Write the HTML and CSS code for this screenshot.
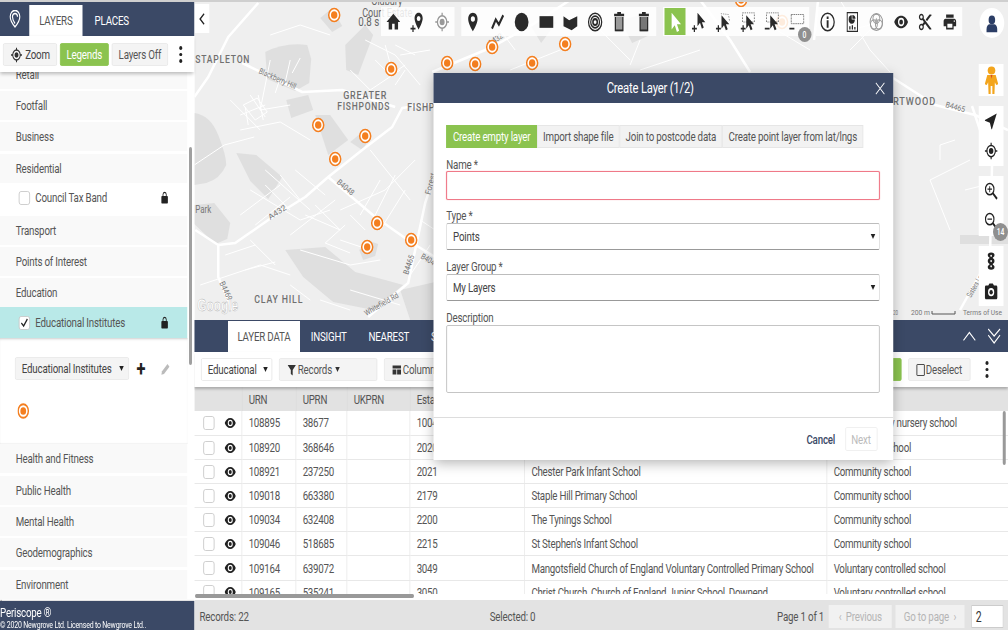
FILE: index.html
```html
<!DOCTYPE html>
<html lang="en">
<head>
<meta charset="utf-8">
<title>Periscope</title>
<link rel="stylesheet" href="styles.css">
</head>
<body>
<svg class="sprite" xmlns="http://www.w3.org/2000/svg">
  <symbol id="i-home" viewBox="0 0 24 24"><path d="M10 21v-7h4v7h5.500v-9H23L12 2 1 12h3.500v9z"/></symbol>
  <symbol id="i-pin" viewBox="0 0 24 24"><path fill-rule="evenodd" d="M12 1C7.600 1 4.500 4.400 4.500 8.600 4.500 14 12 23 12 23s7.500-9 7.500-14.400C19.500 4.400 16.400 1 12 1zm0 4.200a3.300 3.300 0 1 1 0 6.600 3.300 3.300 0 0 1 0-6.600z"/></symbol>
  <symbol id="i-pinplus" viewBox="0 0 24 24"><path fill-rule="evenodd" d="M14 1c-4 0-6.500 3-6.500 6.800C7.500 12.500 14 21 14 21s6.500-8.500 6.500-13.200C20.500 4 18 1 14 1zm0 3.800a3 3 0 1 1 0 6 3 3 0 0 1 0-6z"/><path d="M4 16h2v3h3v2H6v3H4v-3H1v-2h3z"/></symbol>
  <symbol id="i-target" viewBox="0 0 24 24"><circle cx="12" cy="12" r="7.500" fill="none" stroke="currentColor" stroke-width="2"/><circle cx="12" cy="12" r="4"/><path d="M11 1h2v4h-2zM11 19h2v4h-2zM1 11h4v2H1zM19 11h4v2h-4z"/></symbol>
  <symbol id="i-line" viewBox="0 0 24 24"><path d="M3 20l6-11 5 6 7-11" fill="none" stroke="currentColor" stroke-width="3.200"/></symbol>
  <symbol id="i-circle" viewBox="0 0 24 24"><circle cx="12" cy="12" r="11"/></symbol>
  <symbol id="i-rect" viewBox="0 0 24 24"><rect x="1" y="5" width="22" height="14"/></symbol>
  <symbol id="i-poly" viewBox="0 0 24 24"><path d="M1 5l9 5 13-5v12l-9 5-13-5z"/></symbol>
  <symbol id="i-rings" viewBox="0 0 24 24"><g fill="none" stroke="currentColor"><circle cx="12" cy="12" r="10.500" stroke-width="2"/><circle cx="12" cy="12" r="7" stroke-width="2"/><circle cx="12" cy="12" r="3.500" stroke-width="2.500"/></g></symbol>
  <symbol id="i-trash" viewBox="0 0 24 24"><path fill="#999" d="M6 6h12v17H6z"/><path d="M9 0h6v2h5v3H4V2h5zM5 6h2v15h10V6h2v17H5z"/></symbol>
  <symbol id="i-trash2" viewBox="0 0 24 24"><path fill="#777" d="M6 6h12v17H6z"/><path d="M9 0h6v2h5v3H4V2h5zM5 6h2v15h10V6h2v17H5z"/></symbol>
  <symbol id="i-cursor" viewBox="0 0 24 24"><path d="M6 1v20l5-5 3.500 8 3.500-1.500-3.500-7.800H21z"/></symbol>
  <symbol id="i-curplus" viewBox="0 0 24 24"><path d="M9 1v16l4-4 3 7 3-1.300-3-6.500h5.500z"/><path d="M3 16h2v3h3v2H5v3H3v-3H0v-2h3z"/></symbol>
  <symbol id="i-curpoly" viewBox="0 0 24 24"><path d="M8 2l12 1 2 8" fill="none" stroke="#777" stroke-dasharray="2 1.500"/><path d="M9 4v16l4-4 3 6 3-1.300-3-6h5.500z"/><path d="M3 16h2v3h3v2H5v3H3v-3H0v-2h3z"/></symbol>
  <symbol id="i-boxplus" viewBox="0 0 24 24"><rect x="3" y="1" width="19" height="11" fill="none" stroke="#555" stroke-dasharray="2 1.500"/><path d="M9 4v16l4-4 3 6 3-1.300-3-6h5.500z"/><path d="M3 16h2v3h3v2H5v3H3v-3H0v-2h3z"/></symbol>
  <symbol id="i-boxminus" viewBox="0 0 24 24"><rect x="3" y="1" width="19" height="11" fill="none" stroke="#555" stroke-dasharray="2 1.500"/><path d="M9 4v16l4-4 3 6 3-1.300-3-6h5.500z"/><path d="M0 19h8v2H0z"/></symbol>
  <symbol id="i-rectminus" viewBox="0 0 24 24"><rect x="3" y="3" width="20" height="11" fill="none" stroke="#555" stroke-dasharray="2.500 1"/><path d="M0 19h8v2H0z"/></symbol>
  <symbol id="i-info" viewBox="0 0 24 24"><circle cx="12" cy="12" r="10.500" fill="none" stroke="currentColor" stroke-width="2"/><path d="M10.500 5.500h3v3h-3zM10.500 10h3v9h-3z"/></symbol>
  <symbol id="i-doc" viewBox="0 0 24 24"><path fill-rule="evenodd" d="M3 0h18v24H3zm1.500 1.500v21h15v-21z"/><path d="M11 4a5 5 0 1 0 5 5h-5z"/><path d="M12 3.500a5 5 0 0 1 5 4.500h-5zM7 21v-4h2v4zM11 21v-5h2v5zM15 21v-3h2v3z"/></symbol>
  <symbol id="i-lock" viewBox="0 0 24 24"><g fill="none" stroke="#999" stroke-width="1.500"><circle cx="12" cy="12" r="10"/><circle cx="12" cy="8" r="5.500"/><circle cx="8" cy="15" r="5.500"/><circle cx="16" cy="15" r="5.500"/></g><path fill="#aaa" d="M12 7l4 6H8z"/></symbol>
  <symbol id="i-eye" viewBox="0 0 24 24"><path fill-rule="evenodd" d="M12 4.500C7 4.500 2.700 7.600 1 12c1.700 4.400 6 7.500 11 7.500s9.300-3.100 11-7.500c-1.700-4.400-6-7.500-11-7.500zM12 17a5 5 0 1 1 0-10 5 5 0 0 1 0 10zm0-8a3 3 0 1 0 0 6 3 3 0 0 0 0-6z"/></symbol>
  <symbol id="i-cut" viewBox="0 0 24 24"><path fill-rule="evenodd" d="M9.640 7.640c.23-.5.360-1.050.360-1.640 0-2.210-1.790-4-4-4S2 3.790 2 6s1.790 4 4 4c.59 0 1.140-.13 1.640-.36L10 12l-2.360 2.360C7.140 14.130 6.590 14 6 14c-2.210 0-4 1.790-4 4s1.790 4 4 4 4-1.790 4-4c0-.59-.13-1.140-.36-1.640L12 14l7 7h3v-1L9.640 7.640zM6 8c-1.100 0-2-.89-2-2s.9-2 2-2 2 .89 2 2-.9 2-2 2zm0 12c-1.100 0-2-.89-2-2s.9-2 2-2 2 .89 2 2-.9 2-2 2z"/><path d="M19 3l-6 6 2 2 7-7V3z"/></symbol>
  <symbol id="i-print" viewBox="0 0 24 24"><path fill-rule="evenodd" d="M19 8H5c-1.660 0-3 1.340-3 3v6h4v4h12v-4h4v-6c0-1.660-1.340-3-3-3zm-3 11H8v-5h8v5zm3-7c-.55 0-1-.45-1-1s.45-1 1-1 1 .45 1 1-.45 1-1 1z"/><path d="M18 3H6v4h12z"/></symbol>
  <symbol id="i-user" viewBox="0 0 24 24"><circle cx="12" cy="7.500" r="5.500"/><path d="M3 23v-4c0-4 3-6 5-6h8c2 0 5 2 5 6v4z"/></symbol>
  <symbol id="i-nav" viewBox="0 0 24 24"><path d="M22 2L1 10.500v1l8.800 2.700L12.500 23h1z"/></symbol>
  <symbol id="i-zoomin" viewBox="0 0 24 24"><circle cx="9.500" cy="9.500" r="7.500" fill="none" stroke="currentColor" stroke-width="2"/><path d="M15 15l7.500 7.500" stroke="currentColor" stroke-width="3"/><path d="M8.700 5.500h1.600v3.200h3.200v1.600h-3.200v3.200H8.700v-3.200H5.500V8.700h3.200z"/></symbol>
  <symbol id="i-zoomout" viewBox="0 0 24 24"><circle cx="9.500" cy="9.500" r="7.500" fill="none" stroke="currentColor" stroke-width="2"/><path d="M15 15l7.500 7.500" stroke="currentColor" stroke-width="3"/><path d="M5.500 8.700h8v1.600h-8z"/></symbol>
  <symbol id="i-traffic" viewBox="0 0 24 24"><ellipse cx="12" cy="4" rx="6" ry="3.500"/><ellipse cx="12" cy="12" rx="6" ry="4"/><ellipse cx="12" cy="20" rx="6" ry="3.500"/><rect x="9" y="2" width="6" height="20"/><g fill="#fff"><circle cx="12" cy="5" r="1.500"/><circle cx="12" cy="12" r="1.500"/><circle cx="12" cy="19" r="1.500"/></g></symbol>
  <symbol id="i-camera" viewBox="0 0 24 24"><path fill-rule="evenodd" d="M21 4.500h-4L15 2H9L7 4.500H3c-1.100 0-2 .9-2 2V21c0 1.100.9 2 2 2h18c1.100 0 2-.9 2-2V6.500c0-1.100-.9-2-2-2zM12 19a5.500 5.500 0 1 1 0-11 5.500 5.500 0 0 1 0 11z"/><circle cx="12" cy="13.500" r="3"/></symbol>
  <symbol id="i-peg" viewBox="0 0 16 32" preserveAspectRatio="none"><circle cx="8" cy="5" r="4.500" fill="#f3a51d"/><path fill="#f3a51d" d="M3 10h10l3 10-2.500 1-1.500-3-.5 13H9v-9H7v9H4.500L4 18l-1.500 3L0 20z"/><path fill="#d9472b" d="M7 10h2l-1 4z"/></symbol>
  <symbol id="i-logo" viewBox="0 0 24 24"><g fill="none" stroke="currentColor" stroke-width="2"><path d="M12 22.500S3.500 15 3.500 9a8.500 8.500 0 0 1 17 0c0 6-8.500 13.500-8.500 13.500z"/><path d="M12 18s-4.500-5-4.500-9a4.500 4.500 0 0 1 9 0"/></g></symbol>
  <symbol id="i-padlock" viewBox="0 0 24 24"><path fill-rule="evenodd" d="M18 9h-1V6.500a5 5 0 0 0-10 0V9H6c-1.100 0-2 .9-2 2v10c0 1.100.9 2 2 2h12c1.100 0 2-.9 2-2V11c0-1.100-.9-2-2-2zM9 6.500a3 3 0 0 1 6 0V9H9z"/></symbol>
  <symbol id="i-funnel" viewBox="0 0 24 24"><path d="M1 2h22l-8.500 10v11l-5-3v-8z"/></symbol>
  <symbol id="i-cols" viewBox="0 0 24 24"><path d="M0 3h24v6H0zM0 11h11v10H0zM13 11h11v10H13z"/></symbol>
  <symbol id="i-pencil" viewBox="0 0 24 24"><path d="M2 22l1.500-6L16 3.500l4.500 4.500L8 20.500z"/></symbol>
  <symbol id="i-marker" viewBox="0 0 20 20"><circle cx="10" cy="10" r="8.500" fill="#fff" stroke="#f47f20" stroke-width="2.400"/><circle cx="10" cy="10" r="4.800" fill="#f47f20"/></symbol>
</svg>

<div class="app">
  <aside class="sidebar">
    <div class="side-head">
      <div class="logo"><svg class="ico-logo"><use href="#i-logo"/></svg></div>
      <div class="side-tab active">LAYERS</div>
      <div class="side-tab">PLACES</div>
    </div>
    <div class="side-actions">
      <button class="btn btn-zoom"><svg class="ico-sm"><use href="#i-target"/></svg>Zoom</button>
      <button class="btn btn-green btn-legends">Legends</button>
      <button class="btn btn-off">Layers Off</button>
      <div class="kebab"><i></i><i></i><i></i></div>
    </div>
    <div class="side-body">
      <div class="list">
        <div class="group first">Retail</div>
        <div class="group">Footfall</div>
        <div class="group">Business</div>
        <div class="group">Residential</div>
        <div class="layer"><span class="check"></span><span class="layer-name">Council Tax Band</span><svg class="ico-lock"><use href="#i-padlock"/></svg></div>
        <div class="group">Transport</div>
        <div class="group">Points of Interest</div>
        <div class="group">Education</div>
        <div class="layer selected"><span class="check checked">
          <svg viewBox="0 0 12 12"><path d="M2 6l3 3 5-7" fill="none" stroke="#222" stroke-width="1.600"/></svg></span><span class="layer-name">Educational Institutes</span><svg class="ico-lock"><use href="#i-padlock"/></svg></div>
        <div class="legend">
          <div class="legend-row">
            <div class="fake-select legend-select"><span>Educational Institutes</span><i class="caret"></i></div>
            <span class="legend-plus">+</span>
            <svg class="ico-pencil"><use href="#i-pencil"/></svg>
          </div>
          <svg class="legend-marker"><use href="#i-marker"/></svg>
        </div>
        <div class="group">Health and Fitness</div>
        <div class="group">Public Health</div>
        <div class="group">Mental Health</div>
        <div class="group">Geodemographics</div>
        <div class="group">Environment</div>
      </div>
      <div class="track"><div class="thumb"></div></div>
    </div>
    <div class="side-foot">
      <div class="brand">Periscope ®</div>
      <div class="copy">© 2020 Newgrove Ltd. Licensed to Newgrove Ltd..</div>
    </div>
  </aside>

  <main class="main">
    <section class="map">
      <svg class="map-art" viewBox="194 2 814 318" preserveAspectRatio="none">
        <defs><g id="mk"><ellipse rx="5.500" ry="6.500" fill="#fff" stroke="#f47f20" stroke-width="1.500"/><ellipse rx="3.200" ry="3.800" fill="#f47f20"/></g></defs>
        <rect x="194" y="0" width="814" height="320" fill="#efefef"/>
        <g fill="#dfdfdf">
          <path d="M194 113q16 2 24 22t8 30q-6 14-20 18l-12 2z"/>
          <path d="M265 52q20-10 42-7l4 14-2 24-14 8-28-12z"/>
          <path d="M286 100l22-5 5 15-22 8z"/>
          <path d="M315 115l15 0 18 25-20 15z"/>
          <path d="M236 153l20 2 26 22-14 22-18-18z"/>
          <path d="M194 205l20-2 16 20-3 16-12 5-21-20z"/>
          <path d="M285 250l40-3 30 25 30 8 18 5-30 25-40-8-30-25z"/>
          <path d="M350 142l12-10 8 6-8 12z"/>
          <path d="M359 250l10-9 9 3-3 12-12 4z"/>
          <path d="M320 18l12-10 10 18-10 6z"/>
          <path d="M345 45l20-20 8 10-15 40-12-5z"/>
          <path d="M400 290l35-8v38h-25z"/>
          <path d="M530 25l20-10 6 8-15 20z"/>
          <path d="M620 20l20-5 10 20-18 8z"/>
          <path d="M960 235h48v9h-48z"/>
        </g>
        <g fill="none" stroke="#fff" stroke-width="2.500" stroke-linejoin="round">
          <path d="M195 230l23 15 17-2 33-23 37-23 23-20 34-27 30-23 10-19 33-5"/>
          <path d="M328 177l47 40 37 26 23 14"/>
          <path d="M435 173l-10 30-10 47-7 33-40 34"/>
          <path d="M218 245v32l14 33"/>
          <path d="M258 3l-30 34-20 40-14 20"/>
          <path d="M242 63l60 29 40-2 53 17"/>
          <path d="M432 72l58-24 40-22 40-26"/>
          <path d="M893 78l42 27 40 10 33 15"/>
          <path d="M972 106l20 60-2 90-30 54"/>
          <path d="M818 0l-4 40"/>
          <path d="M700 0l30 40 20 32"/>
        </g>
        <g fill="none" stroke="#fff" stroke-width="1">
          <path d="M240 130l40-8 30 18M194 165l30-20 30-8M250 190l50 30 30-10M265 170l45 40M290 235l45-35M300 250l50 15 30-5M340 210l45-20 30-30M370 150l40 50M350 70l20 20 30-20M365 40l30 15 25 30M400 55l30-5M270 60l-10 50 30-5M230 100l30 30M330 35l-30-10-30 10M200 285l60-20 30 10M350 290l50 15M560 50l-50 20M600 30l30 30M700 50l-60 20M760 20l50 30M840 0l30 50 20 22M950 230l-20-50 40-20M955 140l-15 5v15M965 190l20-5"/>
          <path d="M243 105l12 15 12-8-10-14zM250 95l15 22M240 115l25-10M248 125l-3-18M258 95l5 25M375 60l15 15 15-10M385 45l8 30M395 45l20 10M405 70l-10 15M265 185l25 25M280 175l20 25M295 170l30 25M240 215l40-30M255 225l35-28M305 215l35 15M315 205l25 25M345 225l-20 18 25 10M340 240l30 10M350 215l15 15M380 180l-20 35M395 175l-20 40M405 190l-25 40M245 270l30-8M290 285l20 15M320 300l30 10M410 275l20-30M420 220l15 10M225 255l30-10M250 240l25 25M280 78l-5 15M290 60l-5 22M300 58l-8 15M500 30l15 20M640 40l-10 25M850 30l40-10M850 50l20-20"/>
        </g>
        <g class="ml ml-b">
          <text x="195" y="63" textLength="55" lengthAdjust="spacingAndGlyphs">STAPLETON</text>
          <text x="343" y="99" textLength="44" lengthAdjust="spacingAndGlyphs">GREATER</text>
          <text x="337" y="110" textLength="53" lengthAdjust="spacingAndGlyphs">FISHPONDS</text>
          <text x="407" y="111" textLength="28" lengthAdjust="spacingAndGlyphs">FISHP</text>
          <text x="254" y="303" textLength="49" lengthAdjust="spacingAndGlyphs">CLAY HILL</text>
          <text x="893" y="105" textLength="43" lengthAdjust="spacingAndGlyphs">RTWOOD</text>
        </g>
        <g class="ml">
          <text x="195" y="213" textLength="16" lengthAdjust="spacingAndGlyphs" class="ml-park">Park</text>
          <text x="371" y="5" textLength="31" lengthAdjust="spacingAndGlyphs" class="ml-big">Oldbury</text>
          <text x="362" y="17" textLength="50" lengthAdjust="spacingAndGlyphs" class="ml-big">Court Estate</text>
          <text x="358" y="26" textLength="21" lengthAdjust="spacingAndGlyphs" class="ml-big">0.8 s</text>
          <text transform="translate(258 73) rotate(24)" textLength="40" lengthAdjust="spacingAndGlyphs">Blackberry Hill</text>
          <text transform="translate(270 220) rotate(-33)" textLength="20" lengthAdjust="spacingAndGlyphs">A432</text>
          <text transform="translate(336 183) rotate(40)" textLength="20" lengthAdjust="spacingAndGlyphs">B4048</text>
          <text transform="translate(408 275) rotate(-72)" textLength="20" lengthAdjust="spacingAndGlyphs">B4465</text>
          <text transform="translate(219 283) rotate(65)" textLength="20" lengthAdjust="spacingAndGlyphs">B4469</text>
          <text transform="translate(366 316) rotate(-30)" textLength="38" lengthAdjust="spacingAndGlyphs">Whitefield Rd</text>
          <text transform="translate(430 195) rotate(-75)" textLength="22" lengthAdjust="spacingAndGlyphs">Forest</text>
          <text transform="translate(420 258) rotate(30)" textLength="15" lengthAdjust="spacingAndGlyphs">B404</text>
          <text transform="translate(945 107) rotate(15)" textLength="20" lengthAdjust="spacingAndGlyphs">B4465</text>
          <text transform="translate(971 298) rotate(-60)" textLength="24" lengthAdjust="spacingAndGlyphs">Sisters Ln</text>
          <text transform="translate(490 46) rotate(-33)" textLength="16" lengthAdjust="spacingAndGlyphs">A432</text>
          <text x="911" y="315" textLength="19" lengthAdjust="spacingAndGlyphs">200 m</text>
          <text x="963" y="315" textLength="39" lengthAdjust="spacingAndGlyphs">Terms of Use</text>
          <text x="893" y="315" textLength="5" lengthAdjust="spacingAndGlyphs">20</text>
        </g>
        <path d="M932 311v3h23v-3" fill="none" stroke="#555" stroke-width="1"/>
        <text x="197" y="311" class="google" textLength="41" lengthAdjust="spacingAndGlyphs">Google</text>
        <g>
          <use href="#mk" x="334" y="15"/><use href="#mk" x="391" y="69"/><use href="#mk" x="318" y="125"/>
          <use href="#mk" x="365" y="136"/><use href="#mk" x="335" y="159"/><use href="#mk" x="377" y="223"/>
          <use href="#mk" x="411" y="240"/><use href="#mk" x="367" y="247"/><use href="#mk" x="447" y="63"/>
          <use href="#mk" x="475" y="64"/><use href="#mk" x="492" y="47"/><use href="#mk" x="532" y="63"/>
          <use href="#mk" x="565" y="44"/><use href="#mk" x="741" y="0"/><use href="#mk" x="782" y="22"/>
        </g>
      </svg>

      <button class="collapse"><svg viewBox="0 0 10 16"><path d="M8 2L2 8l6 6" fill="none" stroke="#222" stroke-width="2"/></svg></button>

      <div class="tools">
        <div class="tool-group">
          <span class="tool"><svg><use href="#i-home"/></svg></span>
          <span class="tool"><svg><use href="#i-pinplus"/></svg></span>
          <span class="tool grey"><svg><use href="#i-target"/></svg></span>
        </div>
        <div class="tool-group">
          <span class="tool"><svg><use href="#i-pin"/></svg></span>
          <span class="tool"><svg><use href="#i-line"/></svg></span>
          <span class="tool"><svg><use href="#i-circle"/></svg></span>
          <span class="tool"><svg><use href="#i-rect"/></svg></span>
          <span class="tool"><svg><use href="#i-poly"/></svg></span>
          <span class="tool"><svg><use href="#i-rings"/></svg></span>
          <span class="tool"><svg><use href="#i-trash"/></svg></span>
          <span class="tool"><svg><use href="#i-trash2"/></svg></span>
        </div>
        <div class="tool-group has-badge">
          <span class="tool tool-on"><svg><use href="#i-cursor"/></svg></span>
          <span class="tool"><svg><use href="#i-curplus"/></svg></span>
          <span class="tool"><svg><use href="#i-curpoly"/></svg></span>
          <span class="tool"><svg><use href="#i-boxplus"/></svg></span>
          <span class="tool"><svg><use href="#i-boxminus"/></svg></span>
          <span class="tool"><svg><use href="#i-rectminus"/></svg></span>
          <span class="badge badge-tools">0</span>
        </div>
        <div class="tool-group">
          <span class="tool"><svg><use href="#i-info"/></svg></span>
          <span class="tool"><svg><use href="#i-doc"/></svg></span>
          <span class="tool"><svg><use href="#i-lock"/></svg></span>
          <span class="tool"><svg><use href="#i-eye"/></svg></span>
          <span class="tool"><svg><use href="#i-cut"/></svg></span>
          <span class="tool"><svg><use href="#i-print"/></svg></span>
        </div>
      </div>

      <div class="user"><svg><use href="#i-user"/></svg></div>

      <div class="side-tools">
        <div class="st-peg"><svg class="peg"><use href="#i-peg"/></svg></div>
        <div class="st-group"><span class="st"><svg><use href="#i-nav"/></svg></span><span class="st"><svg><use href="#i-target"/></svg></span></div>
        <div class="st-group has-badge"><span class="st"><svg><use href="#i-zoomin"/></svg></span><span class="st"><svg><use href="#i-zoomout"/></svg></span><span class="badge badge-zoom">14</span></div>
        <div class="st-group"><span class="st"><svg><use href="#i-traffic"/></svg></span><span class="st"><svg><use href="#i-camera"/></svg></span></div>
      </div>
    </section>

    <section class="panel">
      <div class="panel-tabs">
        <div class="ptab active">LAYER DATA</div>
        <div class="ptab">INSIGHT</div>
        <div class="ptab">NEAREST</div>
        <div class="ptab">SUMMARY</div>
        <div class="panel-arrows">
          <svg viewBox="0 0 24 16"><path d="M3 13L12 4l9 9" fill="none" stroke="#fff" stroke-width="1.600"/></svg>
          <svg viewBox="0 0 24 20"><path d="M3 2l9 8 9-8M3 9l9 9 9-9" fill="none" stroke="#fff" stroke-width="1.600"/></svg>
        </div>
      </div>
      <div class="panel-bar">
        <div class="fake-select bar-select"><span>Educational</span><i class="caret"></i></div>
        <button class="btn bar-btn"><svg class="ico-bar"><use href="#i-funnel"/></svg>Records<i class="caret caret-grey"></i></button>
        <button class="btn bar-btn"><svg class="ico-bar"><use href="#i-cols"/></svg>Columns<i class="caret caret-grey"></i></button>
        <span class="bar-spacer"></span>
        <button class="btn btn-green bar-green"></button>
        <button class="btn bar-desel"><span class="desel-box"></span>Deselect</button>
        <div class="kebab kebab-bar"><i></i><i></i><i></i></div>
      </div>
      <div class="table-wrap">
        <table class="grid">
          <colgroup><col class="c0"><col class="c1"><col class="c2"><col class="c3"><col class="c4"><col class="c5"><col class="c6"></colgroup>
          <thead><tr><th></th><th>URN</th><th>UPRN</th><th>UKPRN</th><th>Establishment</th><th>Name</th><th>Type</th></tr></thead>
          <tbody>
            <tr><td class="ctl"><span class="check"></span><svg><use href="#i-eye"/></svg></td><td>108895</td><td>38677</td><td></td><td>1004</td><td></td><td>Local authority nursery school</td></tr>
            <tr><td class="ctl"><span class="check"></span><svg><use href="#i-eye"/></svg></td><td>108920</td><td>368646</td><td></td><td>2020</td><td></td><td>Community school</td></tr>
            <tr><td class="ctl"><span class="check"></span><svg><use href="#i-eye"/></svg></td><td>108921</td><td>237250</td><td></td><td>2021</td><td>Chester Park Infant School</td><td>Community school</td></tr>
            <tr><td class="ctl"><span class="check"></span><svg><use href="#i-eye"/></svg></td><td>109018</td><td>663380</td><td></td><td>2179</td><td>Staple Hill Primary School</td><td>Community school</td></tr>
            <tr><td class="ctl"><span class="check"></span><svg><use href="#i-eye"/></svg></td><td>109034</td><td>632408</td><td></td><td>2200</td><td>The Tynings School</td><td>Community school</td></tr>
            <tr><td class="ctl"><span class="check"></span><svg><use href="#i-eye"/></svg></td><td>109046</td><td>518685</td><td></td><td>2215</td><td>St Stephen's Infant School</td><td>Community school</td></tr>
            <tr><td class="ctl"><span class="check"></span><svg><use href="#i-eye"/></svg></td><td>109164</td><td>639072</td><td></td><td>3049</td><td>Mangotsfield Church of England Voluntary Controlled Primary School</td><td>Voluntary controlled school</td></tr>
            <tr><td class="ctl"><span class="check"></span><svg><use href="#i-eye"/></svg></td><td>109165</td><td>535241</td><td></td><td>3050</td><td>Christ Church, Church of England Junior School, Downend</td><td>Voluntary controlled school</td></tr>
          </tbody>
        </table>
        <div class="vscroll"></div>
      </div>
      <div class="hscroll"><div class="hthumb"></div></div>
      <div class="status">
        <span class="st-records">Records: 22</span>
        <span class="st-selected">Selected: 0</span>
        <span class="st-page">Page 1 of 1</span>
        <span class="pg pg-prev">‹&nbsp;&nbsp;Previous</span>
        <span class="pg pg-go">Go to page&nbsp;&nbsp;›</span>
        <span class="pg-input">2</span>
      </div>
    </section>
  </main>

  <div class="modal">
    <div class="modal-head"><span class="modal-title">Create Layer (1/2)</span>
      <svg class="modal-x" viewBox="0 0 16 16"><path d="M1 1l14 14M15 1L1 15" stroke="#fff" stroke-width="1.300" fill="none"/></svg>
    </div>
    <div class="modal-body">
      <div class="mtabs">
        <span class="mtab m1 on">Create empty layer</span>
        <span class="mtab m2">Import shape file</span>
        <span class="mtab m3">Join to postcode data</span>
        <span class="mtab m4">Create point layer from lat/lngs</span>
      </div>
      <div class="label">Name *</div>
      <div class="input invalid"></div>
      <div class="label">Type *</div>
      <div class="input select"><span>Points</span><i class="caret"></i></div>
      <div class="label">Layer Group *</div>
      <div class="input select"><span>My Layers</span><i class="caret"></i></div>
      <div class="label">Description</div>
      <div class="input textarea"></div>
    </div>
    <div class="modal-foot">
      <span class="cancel">Cancel</span>
      <span class="next">Next</span>
    </div>
  </div>
</div>
</body>
</html>
```

FILE: styles.css
```css
* { box-sizing: border-box; }
html, body { margin: 0; padding: 0; width: 1008px; height: 630px; overflow: hidden; background: #fff; }
.sprite { display: none; }

/* The reference is a capture squeezed horizontally: lay out wide, then squeeze. */
.app {
  width: 1344px; height: 630px;
  transform: scaleX(.75); transform-origin: 0 0;
  filter: blur(.35px);
  position: relative; display: flex;
  border-top: 2px solid #cfcfcf;
  font-family: Roboto, "Liberation Sans", sans-serif;
  font-size: 13px; letter-spacing: -.25px; color: #555; background: #fff;
}
button { font: inherit; letter-spacing: inherit; color: inherit; }
svg { fill: currentColor; }

/* Sidebar */
.sidebar { width: 259px; flex: none; display: flex; flex-direction: column; position: relative; z-index: 3; background: #fff; }
.side-head { height: 34px; flex: none; background: #3b4966; display: flex; align-items: flex-end; }
.logo { width: 39px; height: 34px; display: flex; align-items: center; justify-content: center; color: #fff; }
.ico-logo { width: 18px; height: 18px; }
.side-tab { width: 78px; height: 31px; display: flex; align-items: center; justify-content: center; color: #fff; font-size: 13px; }
.side-tab.active { width: 71px; background: #fff; color: #555; }
.side-actions { height: 36px; flex: none; background: #fff; display: flex; align-items: center; gap: 4px; padding: 1px 0 0 4px; box-shadow: 0 2px 4px rgba(0,0,0,.25); position: relative; z-index: 2; }
.btn { height: 23px; border: 1px solid #e8e8e8; background: #f4f4f4; border-radius: 2px; padding: 0; display: inline-flex; align-items: center; justify-content: center; color: #555; font-size: 13px; }
.btn-green { background: #8bc34f; border-color: #8bc34f; color: #fff; }
.btn-zoom { width: 72px; gap: 4px; color: #444; }
.ico-sm { width: 16px; height: 16px; color: #333; }
.btn-legends { width: 65px; }
.btn-off { width: 75px; }
.kebab { width: 26px; display: flex; flex-direction: column; align-items: center; gap: 3px; }
.kebab i { width: 4px; height: 3.500px; border-radius: 50%; background: #222; display: block; }
.side-body { flex: 1; min-height: 0; display: flex; overflow: hidden; }
.list { width: 250px; flex: none; }
.group { height: 29px; margin-bottom: 2.350px; padding-left: 21px; background: #f9f9f9; display: flex; align-items: center; font-size: 13px; color: #555; }
.group.first { margin-top: -12.500px; }
.layer { height: 30px; margin-top: -2.350px; margin-bottom: 3px; padding-left: 25px; display: flex; align-items: center; background: #fff; }
.layer.selected { background: #b9e9e8; height: 31px; margin-bottom: 0; }
.check { width: 15px; height: 14px; border: 1px solid #c8c8c8; border-radius: 3px; background: #fff; display: inline-block; flex: none; }
.check.checked svg { display: block; width: 13px; height: 12px; }
.layer-name { margin-left: 7px; color: #555; flex: 1; }
.ico-lock { width: 13px; height: 13px; margin-right: 24px; color: #222; }
.legend { height: 106px; padding: 19px 0 0 20px; background: #fff; box-shadow: inset 0 3px 3px -2px rgba(0,0,0,.2), inset 0 -2px 2px -2px rgba(0,0,0,.2); }
.legend-row { display: flex; align-items: center; }
.fake-select { height: 23px; display: flex; align-items: center; justify-content: space-between; border: 1px solid #e8e8e8; border-radius: 2px; color: #444; }
.legend-select { width: 152px; background: #f4f4f4; padding: 0 6px 0 8px; }
.caret { width: 0; height: 0; border-left: 3.500px solid transparent; border-right: 3.500px solid transparent; border-top: 5px solid #222; display: inline-block; }
.caret-grey { border-top-color: #333; margin-left: 2px; }
.legend-plus { width: 32px; text-align: center; font-size: 22px; font-weight: 700; color: #222; line-height: 20px; }
.ico-pencil { width: 14px; height: 14px; margin-left: 10px; color: #bbb; }
.legend-marker { display: block; width: 16px; height: 16px; margin: 23px 0 0 3px; }
.track { width: 9px; flex: none; background: #fff; }
.thumb { width: 4px; height: 218px; margin: 75px 0 0 2px; background: #a0a0a0; border-radius: 2px; }
.side-foot { height: 29px; flex: none; background: #3b4966; color: #fff; padding-top: 5px; box-shadow: 0 -1px 1px #aaa; }
.brand { font-size: 13px; line-height: 14px; }
.copy { font-size: 9.300px; line-height: 10px; }

/* Map */
.main { flex: 1; min-width: 0; display: flex; flex-direction: column; }
.map { height: 318px; flex: none; position: relative; overflow: hidden; }
.map-art { display: block; width: 100%; height: 100%; }
.ml text { font-family: Roboto, "Liberation Sans", sans-serif; font-size: 8px; letter-spacing: 0; fill: #777; }
.ml-b text { font-size: 11px; font-weight: 500; letter-spacing: 1px; fill: #707070; }
.ml .ml-big { font-size: 12px; fill: #666; }
.ml .ml-park { font-size: 10px; }
.google { font-family: "Liberation Sans", sans-serif; font-size: 17px; letter-spacing: 0; font-weight: 700; fill: #fff; stroke: #aaa; stroke-width: .4px; }
.collapse { position: absolute; left: 0; top: 2px; width: 20px; height: 29px; border: 0; padding: 0; background: #fff; display: flex; align-items: center; justify-content: center; }
.collapse svg { width: 9px; height: 14px; }
.tools { position: absolute; left: 249px; top: 5px; display: flex; gap: 9px; align-items: flex-start; }
.tool-group { display: flex; height: 29px; background: rgba(255,255,255,.85); position: relative; }
.tool { width: 32.500px; height: 29px; display: flex; align-items: center; justify-content: center; color: #2a2a2a; }
.tool svg { width: 21px; height: 20px; }
.tool.grey { color: #999; }
.tool-on { background: #8bc34f; color: #fff; width: 28px; margin: 1px 2px 1px 2.500px; height: 27px; }
.badge { position: absolute; background: #8f8f8f; color: #fff; border-radius: 50%; font-size: 9px; display: flex; align-items: center; justify-content: center; font-weight: 500; }
.badge-tools { right: -3px; bottom: -6px; width: 18px; height: 15px; }
.badge-zoom { right: -6px; bottom: -5px; width: 20px; height: 18px; font-size: 9px; }
.user { position: absolute; right: 5px; top: 6px; width: 33px; height: 30px; background: #fff; border-radius: 50%; display: flex; align-items: center; justify-content: center; color: #2c3e66; }
.user svg { width: 19px; height: 19px; }
.side-tools { position: absolute; right: 6px; top: 62px; width: 33px; display: flex; flex-direction: column; gap: 9.500px; }
.st-peg { height: 32px; background: #fff; display: flex; justify-content: center; align-items: center; }
.peg { width: 18px; height: 29px; }
.st-group { height: 60.500px; background: #fff; display: flex; flex-direction: column; position: relative; color: #222; }
.st { flex: 1; display: flex; align-items: center; justify-content: center; }
.st svg { width: 21px; height: 18px; }

/* Data panel */
.panel { flex: 1; min-height: 0; display: flex; flex-direction: column; background: #fff; position: relative; z-index: 1; }
.panel-tabs { height: 32px; flex: none; background: #3b4966; display: flex; align-items: flex-end; padding-left: 45px; position: relative; }
.ptab { height: 31px; display: flex; align-items: center; padding: 0 14.500px; color: #fff; font-size: 13px; }
.ptab.active { background: #fff; color: #555; padding: 0 12.500px; }
.panel-arrows { margin-left: auto; height: 32px; display: flex; align-items: center; gap: 12px; padding-right: 8px; align-self: flex-start; }
.panel-arrows svg { width: 21px; height: 16px; }
.panel-arrows svg + svg { height: 18px; }
.panel-bar { height: 35px; flex: none; display: flex; align-items: center; padding-left: 9px; gap: 9px; box-shadow: 0 2px 3px rgba(0,0,0,.25); position: relative; z-index: 2; background: #fff; }
.bar-select { width: 95px; padding: 0 5px 0 8px; background: #fff; }
.bar-btn { width: 131px; gap: 2px; justify-content: flex-start; padding-left: 10px; }
.ico-bar { width: 12px; height: 12px; color: #333; }
.bar-spacer { flex: 1; }
.bar-green { width: 60px; }
.bar-desel { width: 83px; gap: 1px; }
.desel-box { width: 11px; height: 12px; border: 1px solid #333; border-radius: 1px; }
.kebab-bar { width: 30px; margin-right: 13px; margin-left: -2px; }
.table-wrap { height: 207px; flex: none; overflow: hidden; position: relative; }
.grid { border-collapse: collapse; table-layout: fixed; width: 1085px; font-size: 13px; letter-spacing: -.32px; color: #555; }
.c0 { width: 63px; } .c1 { width: 72px; } .c2 { width: 68px; } .c3 { width: 84px; }
.c4 { width: 153px; } .c5 { width: 403px; } .c6 { width: 242px; }
.grid th { height: 24px; background: #e2e2e2; font-weight: 400; text-align: left; padding: 0 0 0 9px; border-right: 1px solid #d2d2d2; color: #555; white-space: nowrap; overflow: hidden; }
.grid td { height: 24.170px; padding: 0 0 0 9px; border-right: 1px solid #e8e8e8; border-bottom: 1px solid #e8e8e8; white-space: nowrap; overflow: hidden; }
.grid td.ctl { padding: 0 0 0 12px; }
.ctl .check { vertical-align: middle; }
.ctl svg { width: 18px; height: 16px; margin-left: 12px; vertical-align: middle; color: #222; }
.vscroll { position: absolute; right: 3px; top: 24px; width: 4px; height: 54px; background: #999; border-radius: 2px; }
.hscroll { height: 6px; flex: none; background: #fff; }
.hthumb { width: 292px; height: 4px; margin-left: 1px; background: #999; border-radius: 2px; }
.status { flex: 1; background: #e3e3e3; display: flex; align-items: center; font-size: 13px; color: #555; padding-top: 3px; }
.st-records { margin-left: 7px; width: 387px; }
.st-selected { width: 383px; }
.st-page { width: 69px; }
.pg { height: 23px; background: #f1f1f1; color: #b5b5b5; display: flex; align-items: center; justify-content: center; }
.pg-prev { width: 84px; margin-right: 5px; }
.pg-go { width: 92px; margin-right: 9px; }
.pg-input { width: 43px; height: 23px; background: #fff; border: 1px solid #ccc; padding-left: 5px; display: flex; align-items: center; color: #333; font-size: 14px; }

/* Modal */
.modal { position: absolute; left: 577.500px; top: 71px; width: 613px; height: 387px; background: #fff; z-index: 10; box-shadow: 0 3px 14px rgba(0,0,0,.3); display: flex; flex-direction: column; }
.modal-head { height: 30px; flex: none; background: #3b4966; color: #fff; display: flex; align-items: center; justify-content: center; padding-right: 34px; position: relative; font-size: 15px; }
.modal-x { position: absolute; right: 10px; top: 9px; width: 15px; height: 13px; }
.modal-body { flex: 1; padding: 22px 17.500px 0; }
.mtabs { display: flex; height: 23px; margin-bottom: 9px; }
.mtab { display: flex; align-items: center; justify-content: center; background: #f2f2f2; border: 1px solid #e6e6e6; font-size: 13px; }
.mtab.on { background: #8bc34f; border-color: #8bc34f; color: #fff; }
.m1 { width: 121px; } .m2 { width: 110px; } .m3 { width: 137px; } .m4 { width: 188px; }
.label { height: 14px; line-height: 16px; color: #555; font-size: 13px; }
.input { width: 578px; height: 27px; border: 1px solid #bdbdbd; border-radius: 2px; margin-bottom: 9px; margin-top: 1px; background: #fff; color: #444; }
.input.invalid { height: 29px; border-color: #ee6f7f; box-shadow: 0 0 1px #ee6f7f; margin-top: 0; margin-bottom: 8px; }
.select { display: flex; align-items: center; justify-content: space-between; padding: 0 5px 0 8px; border-bottom-color: #999; }
.textarea { height: 68px; }
.modal-foot { height: 43px; flex: none; border-top: 1px solid #ddd; display: flex; align-items: center; justify-content: flex-end; padding: 0 21px 0 0; gap: 13px; }
.cancel { color: #3b4966; font-weight: 500; }
.next { width: 43px; height: 24px; border: 1px solid #eee; border-radius: 2px; color: #bbb; display: flex; align-items: center; justify-content: center; }
```
